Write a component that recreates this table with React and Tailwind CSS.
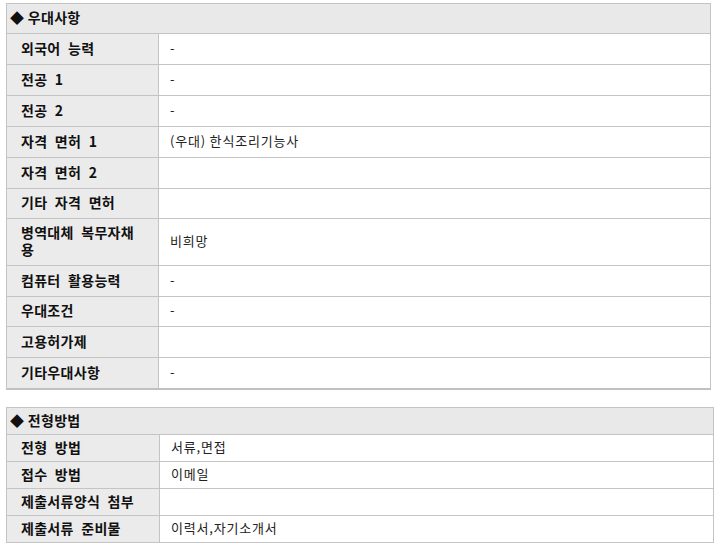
import React from 'react';

const font = { fontFamily: '"Noto Sans CJK KR", "Noto Sans", sans-serif' };

const prefs = [
  ['외국어 능력', '-'],
  ['전공 1', '-'],
  ['전공 2', '-'],
  ['자격 면허 1', '(우대) 한식조리기능사'],
  ['자격 면허 2', ''],
  ['기타 자격 면허', ''],
  ['병역대체 복무자채용', '비희망'],
  ['컴퓨터 활용능력', '-'],
  ['우대조건', '-'],
  ['고용허가제', ''],
  ['기타우대사항', '-'],
];

const screening = [
  ['전형 방법', '서류,면접'],
  ['접수 방법', '이메일'],
  ['제출서류양식 첨부', ''],
  ['제출서류 준비물', '이력서,자기소개서'],
];

function Row({ label, value, h, labelW }) {
  return (
    <div className={`flex border-t border-[#c4c4c4] ${h}`}>
      <div className={`${labelW} shrink-0 bg-[#ebebeb] border-r border-[#c4c4c4] flex items-center pl-[14px] pr-[16px] pb-[2px] font-bold text-[14px] leading-[17px] tracking-[0.3px] [word-spacing:4px] text-[#111]`}>
        {label}
      </div>
      <div className="flex-1 flex items-center pl-[11px] pb-[3px] text-[13px] tracking-[0.8px] text-[#222] bg-white">{value}</div>
    </div>
  );
}

export default function App() {
  return (
    <div className="w-[722px] h-[554px] bg-white pt-[3px] pl-[6px]" style={font}>
      {/* 우대사항 */}
      <div className="w-[705px] border border-[#c4c4c4] border-b-2 border-b-[#c0c0c0]">
        <div className="h-[29px] bg-[#e9e9e9] flex items-center pl-[3px] pb-[2px] font-bold text-[14px] tracking-[0.3px] text-[#111]">
          ◆ 우대사항
        </div>
        {prefs.map(([l, v], i) => (
          <Row key={l} label={l} value={v} labelW="w-[152px]" h={i === 6 ? 'h-[47px]' : i === 5 || i === 8 ? 'h-[30px]' : 'h-[31px]'} />
        ))}
      </div>

      {/* 전형방법 */}
      <div className="mt-[17px] w-[708px] border border-[#c4c4c4]">
        <div className="h-[26px] bg-[#e9e9e9] flex items-center pl-[3px] pb-[2px] font-bold text-[14px] tracking-[0.3px] text-[#111]">
          ◆ 전형방법
        </div>
        {screening.map(([l, v]) => (
          <Row key={l} label={l} value={v} labelW="w-[153px]" h="h-[27px]" />
        ))}
      </div>
    </div>
  );
}
